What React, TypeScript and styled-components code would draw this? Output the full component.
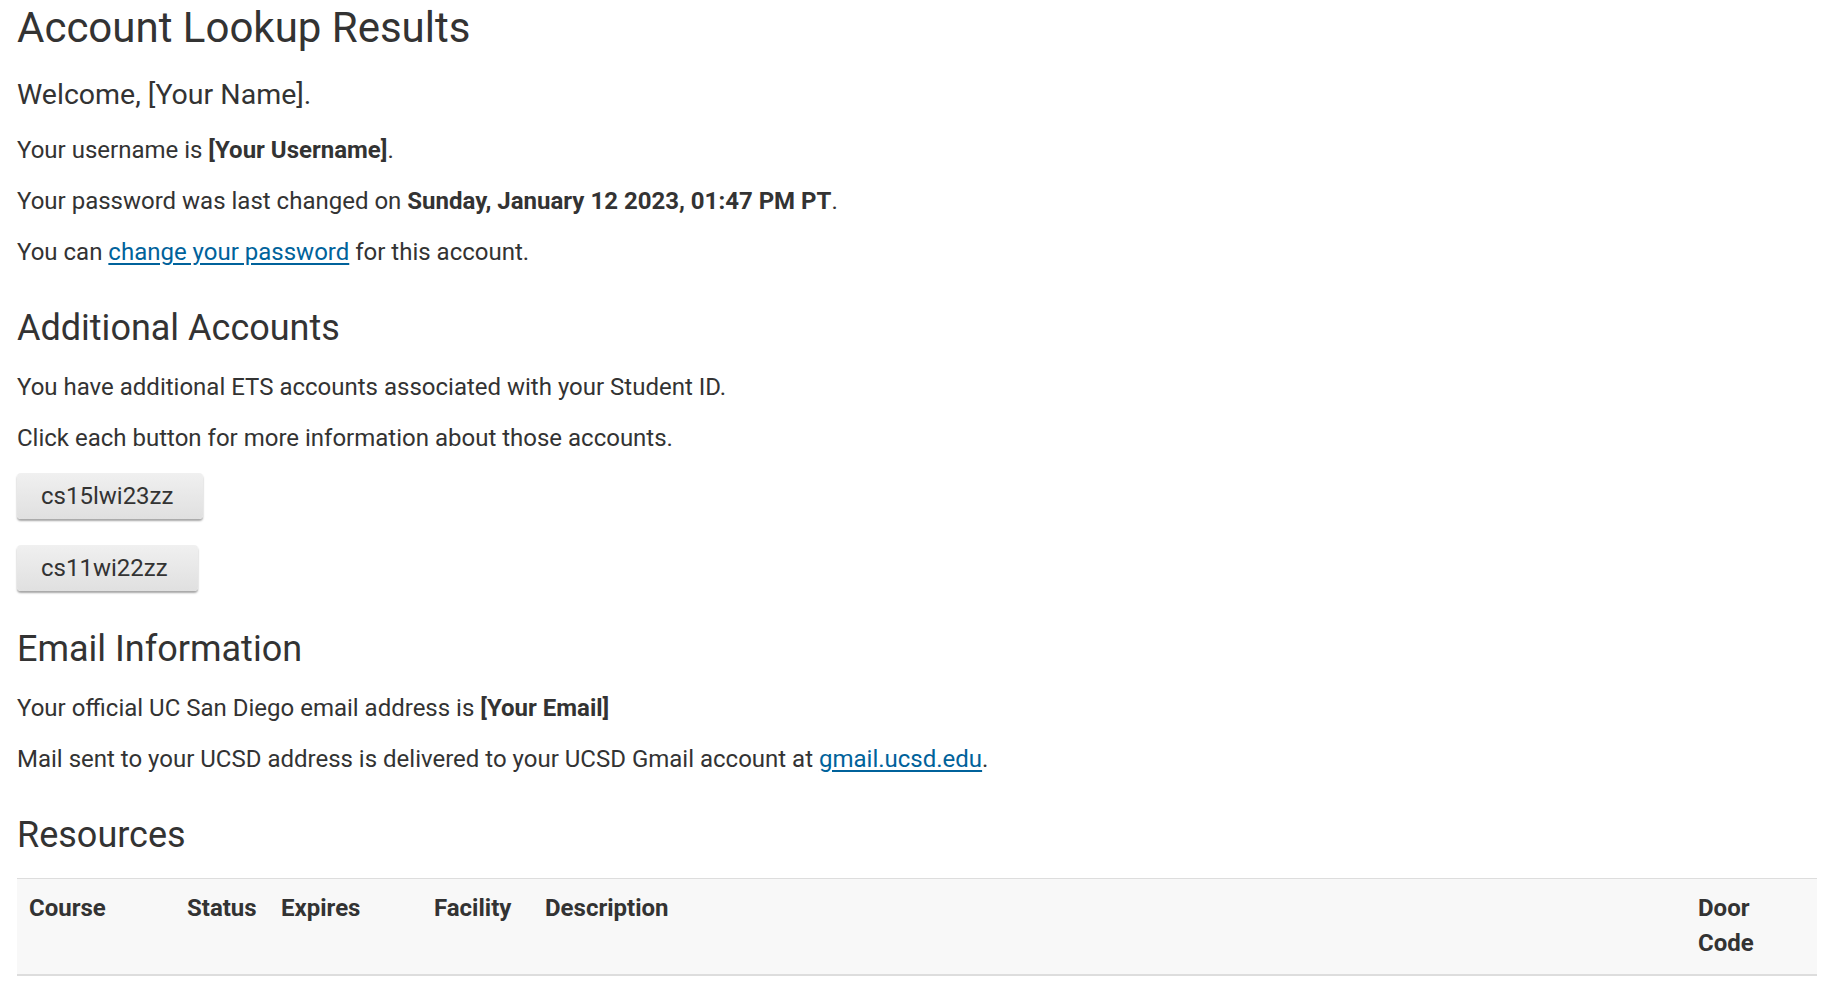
import React from "react";
import styled, { createGlobalStyle } from "styled-components";

const GlobalStyle = createGlobalStyle`
  html, body {
    margin: 0;
    padding: 0;
    background: #ffffff;
  }
  body {
    font-family: Roboto, "Liberation Sans", Arial, sans-serif;
    color: #333333;
  }
  * { box-sizing: border-box; }
`;

const Page = styled.main`
  padding: 3px 18px 0 17px;
  font-family: Roboto, "Liberation Sans", Arial, sans-serif;
  color: #333333;
`;

const Title = styled.h1`
  margin: 0 0 24px;
  font-size: 42px;
  line-height: 50px;
  font-weight: 400;
`;

const Welcome = styled.p`
  margin: 0 0 19px;
  font-size: 28.5px;
  line-height: 36px;
  font-weight: 400;
`;

const SectionTitle = styled.h2`
  margin: 37.5px 0 21.5px;
  font-size: 36px;
  line-height: 40px;
  font-weight: 400;
`;

const Text = styled.p`
  margin: 0 0 15px;
  font-size: 24px;
  line-height: 36px;
`;

const Link = styled.a`
  color: #00629b;
  text-decoration: underline;
  text-underline-offset: 3px;
`;

const ButtonList = styled.div`
  display: flex;
  flex-direction: column;
  align-items: flex-start;
  gap: 26px;
  margin: 17px 0 0;
`;

const AccountButton = styled.button`
  font-family: Roboto, "Liberation Sans", Arial, sans-serif;
  font-size: 24px;
  line-height: 30px;
  color: #333333;
  padding: 8px 30px 8px 24px;
  border: none;
  border-radius: 4px;
  background: linear-gradient(to bottom, #f0f0f0, #e0e0e0);
  box-shadow: 0 2px 2px rgba(0, 0, 0, 0.35);
  cursor: pointer;
`;

const Table = styled.table`
  width: 100%;
  border-collapse: collapse;
  table-layout: fixed;
  margin-top: 23px;
`;

const HeadRow = styled.tr`
  background: #f8f8f8;
  border-top: 1px solid #dddddd;
  border-bottom: 2px solid #dddddd;
`;

const HeadCell = styled.th`
  text-align: left;
  vertical-align: top;
  padding: 12px 12px 13px;
  font-size: 24px;
  line-height: 35px;
  font-weight: 700;
  color: #333333;
`;

const columns: { label: string; width: number }[] = [
  { label: "Course", width: 158 },
  { label: "Status", width: 94 },
  { label: "Expires", width: 153 },
  { label: "Facility", width: 111 },
  { label: "Description", width: 1153 },
  { label: "Door Code", width: 131 },
];

export default function App() {
  return (
    <>
      <GlobalStyle />
      <Page>
        <Title>Account Lookup Results</Title>
        <Welcome>Welcome, [Your Name].</Welcome>
        <Text>
          Your username is <strong>[Your Username]</strong>.
        </Text>
        <Text>
          Your password was last changed on{" "}
          <strong>Sunday, January 12 2023, 01:47 PM PT</strong>.
        </Text>
        <Text>
          You can <Link href="#">change your password</Link> for this account.
        </Text>

        <SectionTitle>Additional Accounts</SectionTitle>
        <Text>You have additional ETS accounts associated with your Student ID.</Text>
        <Text>Click each button for more information about those accounts.</Text>
        <ButtonList>
          <AccountButton type="button">cs15lwi23zz</AccountButton>
          <AccountButton type="button">cs11wi22zz</AccountButton>
        </ButtonList>

        <SectionTitle>Email Information</SectionTitle>
        <Text>
          Your official UC San Diego email address is <strong>[Your Email]</strong>
        </Text>
        <Text>
          Mail sent to your UCSD address is delivered to your UCSD Gmail account at{" "}
          <Link href="#">gmail.ucsd.edu</Link>.
        </Text>

        <SectionTitle>Resources</SectionTitle>
        <Table>
          <colgroup>
            {columns.map((c) => (
              <col key={c.label} style={{ width: c.width }} />
            ))}
          </colgroup>
          <thead>
            <HeadRow>
              {columns.map((c) => (
                <HeadCell key={c.label}>{c.label}</HeadCell>
              ))}
            </HeadRow>
          </thead>
          <tbody />
        </Table>
      </Page>
    </>
  );
}
